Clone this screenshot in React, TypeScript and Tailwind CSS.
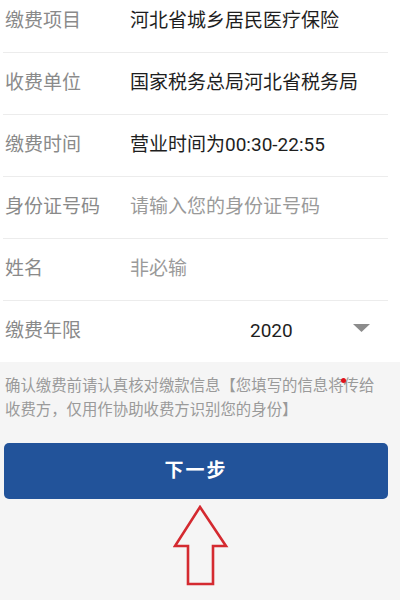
const rows: { label: string; value: string; muted?: boolean }[] = [
  { label: '缴费项目', value: '河北省城乡居民医疗保险' },
  { label: '收费单位', value: '国家税务总局河北省税务局' },
  { label: '缴费时间', value: '营业时间为00:30-22:55' },
  { label: '身份证号码', value: '请输入您的身份证号码', muted: true },
  { label: '姓名', value: '非必输', muted: true },
]

export default function App() {
  return (
    <div
      className="w-[400px] h-[600px] overflow-hidden bg-[#f5f5f5] flex flex-col"
      style={{ fontFamily: "Roboto, 'Noto Sans CJK SC', sans-serif" }}
    >
      <div className="bg-white -mt-[9px]">
        {rows.map(row => (
          <div key={row.label} className="h-[62px] flex items-center border-b border-[#ececec] mr-[12px] ml-[3px]">
            <span className="w-[127px] pl-[2px] text-[19px] text-[#8a8a8a]">{row.label}</span>
            <span className={`text-[19px] ${row.muted ? 'text-[#9a9a9a]' : 'text-[#1e1e1e]'}`}>
              {row.value}
            </span>
          </div>
        ))}
        <div className="h-[61px] flex items-center ml-[3px] mr-[12px]">
          <span className="w-[127px] pl-[2px] text-[19px] text-[#8a8a8a]">缴费年限</span>
          <span className="ml-[120px] text-[19px] text-[#1e1e1e]">2020</span>
          <svg className="ml-[60px] -mt-[8px]" width="17" height="8" viewBox="0 0 17 8">
            <path d="M0 0H17L8.5 8Z" fill="#8c8c8c" />
          </svg>
        </div>
      </div>

      <div className="relative pl-[5px] pr-[18px] pt-[12px] text-[15.4px] leading-[24px] text-[#9a9a9a]">
        确认缴费前请认真核对缴款信息【您填写的信息将传给收费方，仅用作协助收费方识别您的身份】
        <span className="absolute left-[341px] top-[16px] w-[5px] h-[5px] rounded-full bg-[#e0111b]" />
      </div>

      <button className="mt-[21px] ml-[4px] w-[384px] h-[56px] rounded-[5px] bg-[#22539a] text-white text-[19px] font-bold tracking-[2px] flex items-center justify-center">
        下一步
      </button>

      <svg className="mt-[6px] ml-[173px]" width="56" height="82" viewBox="0 0 56 82">
        <path d="M27 2L53 41H40V79H15V41H2Z" fill="none" stroke="#d42a30" strokeWidth="2.6" strokeLinejoin="miter" />
      </svg>
    </div>
  )
}
